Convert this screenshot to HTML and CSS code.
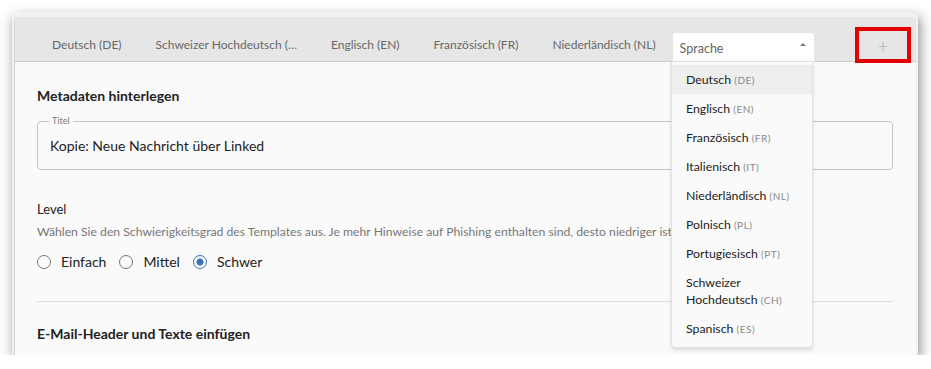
FILE: index.html
```html
<!DOCTYPE html>
<html>
	<head>
		<meta charset="UTF-8">
		<title>Template bearbeiten</title>
		<link rel="stylesheet" href="styles.css">
	</head>
	<body>
	<div class="shot">
	    <div class="panel">

	        <div class="tabs">
	            <a href="javascript:;">Deutsch (DE)</a>
	            <a href="javascript:;" title="Schweizer Hochdeutsch (CH)">Schweizer Hochdeutsch (…</a>
	            <a href="javascript:;">Englisch (EN)</a>
	            <a href="javascript:;">Französisch (FR)</a>
	            <a href="javascript:;">Niederländisch (NL)</a>
	            <div class="select">
	                <span>Sprache</span>
	                <i class="caret"></i>
	            </div>
	            <div class="add">+</div>
	        </div>

	        <!--Sprachauswahl-->
	        <ul class="drop">
	            <li class="hover">Deutsch <small>(DE)</small></li>
	            <li>Englisch <small>(EN)</small></li>
	            <li>Französisch <small>(FR)</small></li>
	            <li>Italienisch <small>(IT)</small></li>
	            <li>Niederländisch <small>(NL)</small></li>
	            <li>Polnisch <small>(PL)</small></li>
	            <li>Portugiesisch <small>(PT)</small></li>
	            <li>Schweizer Hochdeutsch <small>(CH)</small></li>
	            <li>Spanisch <small>(ES)</small></li>
	        </ul>

	        <div class="content">
	            <h3>Metadaten hinterlegen</h3>
	            <fieldset class="field">
	                <legend>Titel</legend>
	                <div class="value">Kopie: Neue Nachricht über Linked</div>
	            </fieldset>

	            <p class="label">Level</p>
	            <p class="hint">Wählen Sie den Schwierigkeitsgrad des Templates aus. Je mehr Hinweise auf Phishing enthalten sind, desto niedriger ist der Schwierigkeitsgrad.</p>
	            <div class="radios">
	                <label><i class="radio"></i>Einfach</label>
	                <label><i class="radio"></i>Mittel</label>
	                <label><i class="radio on"></i>Schwer</label>
	            </div>

	            <hr>
	            <h3>E-Mail-Header und Texte einfügen</h3>
	        </div>

	    </div>
	</div>
	</body>
</html>
```

FILE: styles.css
```css
	        body{
	            margin:0;
	            background-color:#fff;
	            font-family:Lato,"Open Sans",sans-serif;
	        }
	        .shot{
	            width:906px;
	            height:343px;
	            margin:12px 0 0 12px;
	            background-color:#f1f1f1;
	            box-shadow:2px 5px 12px rgba(0,0,0,0.45);
	            padding:5px 2px 0 2px;
	            box-sizing:border-box;
	        }
	        .panel{
	            position:relative;
	            height:100%;
	            background-color:#fafafa;
	            border-left:1px solid #d4d4d4;
	            border-radius:4px 4px 0 0;
	            overflow:hidden;
	        }
	        .tabs{
	            display:flex;
	            align-items:flex-end;
	            height:44px;
	            background-color:#e6e6e6;
	            border-bottom:1px solid #cdcdcd;
	            padding-left:37px;
	        }
	        .tabs a{
	            color:#666;
	            font-size:12px;
	            line-height:29px;
	            padding-bottom:2px;
	            margin-right:34px;
	            text-decoration:none;
	            white-space:nowrap;
	        }
	        .select{
	            display:flex;
	            align-items:center;
	            justify-content:space-between;
	            width:141px;
	            height:29px;
	            margin-left:-17px;
	            margin-bottom:-1px;
	            padding:0 8px 0 7px;
	            box-sizing:border-box;
	            background-color:#fff;
	            border-radius:3px 3px 0 0;
	            color:#666;
	            font-size:12.5px;
	        }
	        .select span{
	            padding-top:1px;
	        }
	        .caret{
	            width:0;
	            height:0;
	            border-left:3px solid transparent;
	            border-right:3px solid transparent;
	            border-bottom:3px solid #777;
	            margin-bottom:6px;
	        }
	        .add{
	            display:flex;
	            align-items:center;
	            justify-content:center;
	            width:56px;
	            height:36px;
	            margin:0 5px -2px auto;
	            box-sizing:border-box;
	            border:4px solid #e30000;
	            color:#aaa;
	            font-size:19px;
	            font-weight:300;
	        }
	        .drop{
	            position:absolute;
	            left:656px;
	            top:44px;
	            width:142px;
	            margin:0;
	            padding:3px 0 4px;
	            box-sizing:border-box;
	            list-style:none;
	            background-color:#fafafa;
	            border:1px solid #e0e0e0;
	            border-radius:0 0 4px 4px;
	            box-shadow:0 2px 4px rgba(0,0,0,0.12);
	            z-index:2;
	        }
	        .drop li{
	            padding:6px 14px 6px 14px;
	            font-size:12.3px;
	            line-height:17px;
	            color:#222;
	        }
	        .drop li.hover{
	            background-color:#eee;
	        }
	        .drop small{
	            font-size:10px;
	            line-height:10px;
	            color:#888;
	            letter-spacing:0.5px;
	        }
	        .content{
	            padding:24px 23px 0 22px;
	            overflow:hidden;
	        }
	        h3{
	            margin:0;
	            font-size:14px;
	            line-height:20px;
	            color:#222;
	            font-weight:bold;
	        }
	        .field{
	            margin:10px 0 0;
	            padding:0 12px;
	            height:54px;
	            box-sizing:border-box;
	            border:1px solid #c4c4c4;
	            border-radius:4px;
	        }
	        .field legend{
	            padding:0 3px;
	            margin-left:-1px;
	            font-size:9px;
	            color:#777;
	            line-height:10px;
	        }
	        .field .value{
	            font-size:14px;
	            color:#222;
	            line-height:20px;
	            padding-top:10px;
	        }
	        .label{
	            margin:30px 0 0;
	            font-size:13px;
	            line-height:18px;
	            color:#222;
	        }
	        .hint{
	            margin:5px 0 0;
	            font-size:12.2px;
	            line-height:18px;
	            color:#777;
	            white-space:nowrap;
	        }
	        .radios{
	            display:flex;
	            gap:13px;
	            margin-top:11px;
	        }
	        .radios label{
	            display:flex;
	            align-items:center;
	            gap:10px;
	            font-size:14px;
	            line-height:20px;
	            color:#222;
	        }
	        .radio{
	            width:14px;
	            height:14px;
	            box-sizing:border-box;
	            border:1.5px solid #767676;
	            border-radius:50%;
	        }
	        .radio.on{
	            border-color:#3874c0;
	            background:radial-gradient(circle,#3874c0 0,#3874c0 3.3px,transparent 3.8px);
	        }
	        hr{
	            margin:29px 0 0;
	            border:0;
	            border-top:1px solid #ddd;
	        }
	        hr + h3{
	            margin-top:22px;
	        }
```
